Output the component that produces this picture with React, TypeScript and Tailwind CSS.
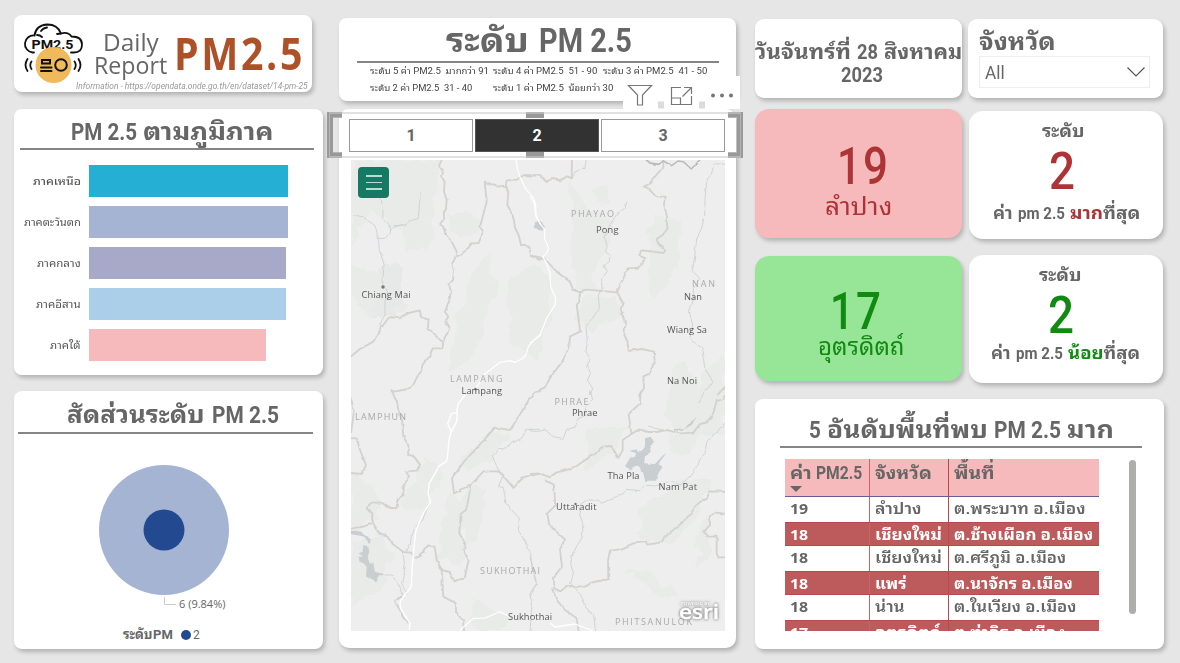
import { useLayoutEffect, useRef, type ReactNode } from "react";

/** Single line of text squeezed or stretched to the width of its box. */
function Fit({ className, children }: { className: string; children: ReactNode }) {
  const box = useRef<HTMLSpanElement>(null);
  const text = useRef<HTMLSpanElement>(null);
  useLayoutEffect(() => {
    const b = box.current;
    const t = text.current;
    if (b && t && t.offsetWidth > 0) {
      t.style.transform = `scaleX(${b.clientWidth / t.offsetWidth})`;
    }
  });
  return (
    <span ref={box} className={"block shrink-0 whitespace-nowrap " + className}>
      <span ref={text} className="inline-block origin-left">
        {children}
      </span>
    </span>
  );
}

const card = "shrink-0 bg-white shadow-[2px_3px_4px_rgba(0,0,0,0.22)]";

function Logo() {
  return (
    <svg className="block h-[62px] w-[62px]" viewBox="0 0 62 62" fill="none" stroke="#111" strokeWidth="1.8" strokeLinecap="round">
      <path d="M11 29.500H9.500A8.500 8.500 0 0 1 11.500 12.500Q13 2 24.500 1.500Q34.500 1.500 38 10.500Q45 8.500 48.500 13.500Q59 13.500 59 21.500Q59 29.500 51 29.500H48" />
      <path d="M14 12Q17 12 19 14M18 8Q20 5 24 4.500M34 11L38 10.500" />
      <text x="8.500" y="25.500" fontFamily="Roboto, sans-serif" fontSize="13.500" fontWeight="700" fill="#111" stroke="none" textLength="42" lengthAdjust="spacingAndGlyphs">PM2.5</text>
      <circle cx="30.500" cy="42" r="18" fill="#f0b95c" stroke="none" />
      <path d="M19 37h8v3.600h-8zM18 44.500h10.500M18 48h10.500" strokeWidth="2" />
      <circle cx="38" cy="42" r="5.800" strokeWidth="2" />
      <path d="M8.500 38.500q-2.500 3.500 0 7.500M4.500 36q-4 6 0 12M51.500 38.500q2.500 3.500 0 7.500M55.500 36q4 6 0 12" />
    </svg>
  );
}

const regions = [
  { name: "ภาคเหนือ", color: "bg-[#26afd5]", bar: "w-[199px]", label: "w-[48px] font-medium" },
  { name: "ภาคตะวันตก", color: "bg-[#a6b4d4]", bar: "w-[199px]", label: "w-[57px]" },
  { name: "ภาคกลาง", color: "bg-[#a8a9c9]", bar: "w-[197px]", label: "w-[44px]" },
  { name: "ภาคอีสาน", color: "bg-[#abcfe8]", bar: "w-[197px]", label: "w-[45px]" },
  { name: "ภาคใต้", color: "bg-[#f6b9bc]", bar: "w-[177px]", label: "w-[31px]" },
];

function MapView() {
  const lbl = { fontFamily: "Open Sans, sans-serif", fontSize: 9.3, fill: "#555" };
  const prov = { fontFamily: "Open Sans, sans-serif", fontSize: 9, fill: "#aaa" };
  return (
    <svg className="block h-[471px] w-[374px]" viewBox="0 0 374 471">
      <filter id="rough" x="0" y="0" width="374" height="471" filterUnits="userSpaceOnUse">
        <feTurbulence type="fractalNoise" baseFrequency="0.14" numOctaves="2" seed="4" />
        <feDisplacementMap in="SourceGraphic" scale="3" xChannelSelector="R" yChannelSelector="G" />
      </filter>
      <filter id="rugged" x="0" y="0" width="374" height="471" filterUnits="userSpaceOnUse">
        <feTurbulence type="fractalNoise" baseFrequency="0.06" numOctaves="3" seed="9" />
        <feDisplacementMap in="SourceGraphic" scale="16" xChannelSelector="R" yChannelSelector="G" />
      </filter>
      <rect width="374" height="471" fill="#eee" />
      <g fill="#e9ebe9" filter="url(#rugged)">
        <path d="M0 0H90L82 60L78 95L60 88L48 70L20 50L0 90ZM98 54L118 52L128 60L124 76L108 78L98 70ZM136 90L146 130L120 200L98 212L106 160L124 110ZM156 120L190 105L200 160L190 190L158 170ZM0 110L50 108L52 152L22 160L0 140Z" />
        <path d="M218 20L236 45L262 60L262 80L242 110L250 130L220 128L222 80ZM300 55L330 60L328 100L312 130L298 140ZM230 137L268 136L270 155L240 170L228 160ZM238 28L258 20L262 44L250 46ZM350 210L374 196V250L350 260ZM190 105L198 120L200 160L186 200L160 180L166 120Z" />
        <path d="M74 295L94 310L70 350L50 346ZM98 330L124 350L108 375L114 400L84 400ZM0 310L30 340L26 360L0 370ZM0 380L30 374L42 400L28 430L0 450ZM148 270L160 272L140 300L118 310L108 300ZM114 330L136 330L124 380L112 390Z" />
        <path d="M236 270L278 268L262 292L234 310ZM318 270L350 274L340 298L320 290ZM290 350L330 320L360 320L350 350L318 385L290 380ZM276 410L300 412L330 440L300 430ZM330 200L350 230L374 225V270L340 275L310 258ZM120 440L158 460L150 471H122ZM350 360L360 350L355 400L345 410Z" />
      </g>
      <path d="M28 108L50 108L52 130L46 150L50 158L24 160L22 148L36 140Z" fill="#e6e9e8" filter="url(#rugged)" />

      <g filter="url(#rough)">
        <g fill="none" stroke="#d4d2cf" strokeWidth="5.500" strokeLinejoin="round">
          <g transform="translate(-11 -5) scale(.33333)">
            <path d="M305 15L297 32L309 50L306 65L314 82L312 110L320 135L318 160L311 172L313 190L300 207L312 222L318 240L336 262L350 290L345 310L337 325L342 350L339 372L328 392L333 410L327 440L315 470L325 485L315 500L328 518L322 535L312 552L307 580L278 580L268 605L248 628L243 650L232 665L222 685L205 702L152 712" />
            <path d="M350 306L380 285L395 265L416 264L430 230L420 215L432 170L440 140L434 80L470 95L498 92L500 76L530 74L552 60L605 62" />
            <path d="M498 92L505 112L502 150L518 178L526 220L536 240L543 270L568 276L573 302L605 308" />
            <path d="M20 615L60 582L100 560L114 535L130 510L148 486L180 490L205 474L240 466L243 486L266 495L263 520L286 542L307 560" />
          </g>
          <g transform="translate(179 -5) scale(.33333)">
            <path d="M0 62L28 60L48 80L65 72L90 76L112 64L125 70L126 10" />
            <path d="M344 10L360 24L384 28L400 16L400 38L384 54L370 72L357 88L341 94L358 102L380 128L404 124L402 148L411 185L412 222L398 240L380 252L385 268L407 285L400 294L336 286L327 302L347 310L325 338L293 340L280 370L266 398L262 412L170 404L152 408L130 408L120 380L80 350L45 312L20 310L0 302" />
            <path d="M262 412L278 442L272 464L286 508L283 540L292 558L296 588L335 582L372 590L374 620L358 656L340 664L342 700L328 720" />
            <path d="M150 408L148 440L140 450L146 492L150 530L120 544L118 580L95 622L66 660L43 698L15 712" />
            <path d="M344 10L360 24L384 28L400 18L425 32L444 18L460 20L484 42L512 12" strokeWidth="4.500" stroke="#bababa" />
            <path d="M562 720L595 685" />
          </g>
          <g transform="translate(-11 230) scale(.33333)">
            <path d="M152 0L170 30L175 60L186 90L190 140L205 165L204 192L222 200L240 224L228 242L198 245L208 260L188 290L188 315L175 330L173 354L150 354L125 338L90 338L82 354L97 370L96 390L104 408L120 432L138 435L158 462L190 486L212 488L228 504L250 485L264 466L284 470L290 510L305 540L328 546L344 574L375 560L386 510L372 485L375 460L358 430L362 372L378 360L388 315L390 285L342 310L336 265L372 215L400 185L450 130L465 113L510 120L530 90L560 40L584 5L600 0" />
            <path d="M390 288L430 244L475 244L492 260L520 294L550 262L605 250" />
            <path d="M305 540L310 620L348 640L348 668L368 690L374 730M20 144L50 145L60 180L78 225L66 252L20 248M20 418L70 410L96 400M28 12L42 60L33 132" />
          </g>
          <g transform="translate(179 230) scale(.33333)">
            <path d="M0 252L30 250L60 262L78 248L110 240L140 228L180 200L200 190L218 170L244 168L265 204L278 180L278 150L304 132L296 72L330 40L332 0" />
            <path d="M304 132L328 118L355 126L380 126L410 120L450 130L490 128L510 102L530 98L550 70L560 32L576 28L595 5" />
            <path d="M45 268L72 285L76 346L52 370L58 406L105 448L90 478L96 530L72 560L72 595L92 604L110 588L165 590L190 576L235 568L234 510L240 482L270 478L310 460L350 456L355 464L395 456L405 438L430 420L455 400L485 368L500 342L530 325L540 304L600 306" />
            <path d="M66 595L80 630L105 660L140 685L147 730M600 372L558 368L540 378L540 405L522 425L535 440L560 440L560 490L565 502L600 502" />
          </g>
        </g>

        <g fill="none" stroke="#cbd0d1" strokeWidth="2.6" strokeLinejoin="round">
          <g transform="translate(-11 -5) scale(.33333)">
            <path d="M122 128L130 160L128 190L148 210L148 235L135 250L115 250L118 285L132 325L128 390L145 410L135 440L135 480L120 505L125 515M20 175L70 186L105 212L115 250M148 225L170 214L195 206L235 190L241 110M160 212L200 210" />
          </g>
          <g transform="translate(179 -5) scale(.33333)">
            <path d="M291 140L285 160L262 175L240 210L225 250L232 275L226 290L240 300L238 320L222 330L232 350L215 370L216 400L205 420L208 460L190 486L168 515L172 560L168 590L180 610L170 635L182 655L172 675L188 700L182 720M126 70L135 50L165 40L168 10" />
            <path d="M600 28L552 26L545 55L530 80L525 130L524 180L515 220L500 250L495 300L487 348L510 370L490 400L490 435L478 470L488 510L480 550L515 580L525 640L548 680L525 710" />
          </g>
          <g transform="translate(-11 230) scale(.33333)">
            <path d="M265 340L250 385L225 410L212 450L200 485M188 485L195 530L185 580L200 615M115 555L158 555L180 590L185 615M600 118L560 118L545 145L512 160L490 180L475 178L458 200L475 240L490 255L475 290L490 292L498 340L538 385L535 420L555 455L572 490L575 530L588 580L570 610L575 650L570 730" />
            <path d="M185 618L166 635L188 680L204 700" strokeWidth="5" />
          </g>
          <g transform="translate(179 230) scale(.33333)">
            <path d="M0 122L20 125L45 120L70 140L100 145L110 118L135 112L145 85L170 75L165 50L188 25L178 0M150 345L165 330L205 330L215 340L280 310L290 298L330 302L345 285L375 288L430 275L450 285L490 250L505 215L525 190L530 155L595 90M150 345L148 370L158 400L158 440L130 485L122 520L130 550L122 580L150 610L165 650L190 670L198 730M0 500L20 580L0 620M528 0L515 20L508 40M355 108L375 115L400 120" />
          </g>
        </g>

        <g fill="#c9ced0">
          <path d="M184 62L190 61L194 67L191 71L184 68Z" />
          <g transform="translate(-11 230) scale(.33333)">
            <path d="M25 422L50 422L70 432L92 448L90 462L72 440L25 430ZM70 465L85 468L88 485L80 500L88 515L100 518L104 545L130 552L112 562L112 578L92 565L78 560L80 530L70 520L58 515L56 500L72 500L55 490L68 485Z" />
          </g>
          <g transform="translate(179 230) scale(.33333)">
            <path d="M345 145L362 140L372 155L360 170L362 185L345 200L342 220L375 222L400 195L408 190L385 222L398 230L385 250L378 272L345 272L340 250L328 228L315 228L300 242L285 228L300 205L315 200L318 190L302 182L320 178L325 190L345 168Z" />
            <path d="M435 117L465 115L480 95L500 80L485 105L460 120L435 122Z" />
          </g>
        </g>
      </g>

      <g fill="none" stroke="#fff" strokeWidth="3.500" strokeLinejoin="round">
        <g transform="translate(-11 -5) scale(.33333)">
          <path d="M528 15L532 40L540 65L555 98L582 132L587 150L588 180L602 210M602 540L582 555L565 575L558 600L545 612L525 622L510 617L480 622L450 645L430 660L415 690L405 702" />
        </g>
        <g transform="translate(179 -5) scale(.33333)">
          <path d="M0 125L12 142L18 185L30 205L45 225L43 250L56 280L50 295L38 305L50 325L60 355L62 395L77 430L75 450L50 490L30 540L0 565" />
        </g>
        <g transform="translate(-11 230) scale(.33333)">
          <path d="M375 15L355 42L350 62L352 70L350 95L332 130L327 150L322 205L318 215L295 230L290 242L268 280L264 310L272 335L250 370L228 420L222 470L216 540L214 590L180 635L182 655L210 700L208 720M350 68L335 70L323 100L334 125" strokeWidth="4" />
          <path d="M360 720L400 685L435 684L480 665L510 680" />
        </g>
        <path d="M199 463L204 467L224 464L242 471" strokeWidth="1.300" />
      </g>

      <circle cx="32" cy="127" r="1.700" fill="#777" />
      <g fill="#777">
        <circle cx="124.500" cy="229" r="1.200" />
        <circle cx="224.500" cy="344" r="1.200" />
      </g>
      <g {...prov}>
        <text x="220" y="57" textLength="43">PHAYAO</text>
        <text x="341" y="127" textLength="23">NAN</text>
        <text x="99" y="221.500" textLength="52.500">LAMPANG</text>
        <text x="4" y="259.500" textLength="51">LAMPHUN</text>
        <text x="203.500" y="244.500" textLength="34">PHRAE</text>
        <text x="129" y="413.500" textLength="60">SUKHOTHAI</text>
        <text x="264" y="464.500" textLength="77">PHITSANULOK</text>
      </g>
      <g {...lbl}>
        <text x="10.500" y="137.500" textLength="49">Chiang Mai</text>
        <text x="245" y="72.500" textLength="22.500">Pong</text>
        <text x="333" y="140" textLength="18">Nan</text>
        <text x="316" y="172.500" textLength="40">Wiang Sa</text>
        <text x="316" y="224" textLength="30">Na Noi</text>
        <text x="110.500" y="234" textLength="40.500">Lampang</text>
        <text x="221" y="255.500" textLength="25.500">Phrae</text>
        <text x="256.500" y="319" textLength="32">Tha Pla</text>
        <text x="307.500" y="329.500" textLength="38.500">Nam Pat</text>
        <text x="205" y="349.500" textLength="40.500">Uttaradit</text>
        <text x="157" y="460" textLength="44">Sukhothai</text>
      </g>
      <g className="drop-shadow-[0_0_1.5px_#555]" fontFamily="Open Sans, sans-serif" fontWeight="600" fill="#fff">
        <text x="330" y="445" fontSize="4" textLength="29" lengthAdjust="spacingAndGlyphs">POWERED BY</text>
        <text x="328" y="459" fontSize="20.500" textLength="40" lengthAdjust="spacingAndGlyphs" stroke="#fff" strokeWidth=".4">esri</text>
      </g>
    </svg>
  );
}

function Slicer() {
  const bar = "absolute bg-[#999]";
  const soft = "absolute bg-[#b5b5b5]";
  return (
    <div className="relative -ml-3 flex h-[46px] w-[416px] shrink-0 gap-0.5 border-y-2 border-[#e1e1e1] py-[5px] pl-[22px] font-bold text-[#666]">
      <div className="h-[33px] w-[124px] border border-[#999] bg-white text-center text-[16px] leading-[32px]">1</div>
      <div className="h-[33px] w-[124px] border border-[#555] bg-[#323232] text-center text-[16px] leading-[32px] text-white">2</div>
      <div className="h-[33px] w-[124px] border border-[#999] bg-white text-center text-[16px] leading-[32px]">3</div>
      <i className={soft + " -top-[2px] left-0 h-[46px] w-[6px]"} />
      <i className={soft + " -top-[2px] left-0 h-[6px] w-[15px]"} />
      <i className={soft + " -bottom-[2px] left-0 h-[6px] w-[15px]"} />
      <i className={bar + " top-0 left-[3px] h-[42px] w-[3px]"} />
      <i className={bar + " top-0 left-[3px] h-[3px] w-[12px]"} />
      <i className={bar + " bottom-0 left-[3px] h-[3px] w-[12px]"} />
      <i className={bar + " -top-[2px] left-0 h-[46px] w-[2px]"} />
      <i className={soft + " -top-[2px] right-0 h-[46px] w-[6px]"} />
      <i className={soft + " -top-[2px] right-0 h-[6px] w-[15px]"} />
      <i className={soft + " -bottom-[2px] right-0 h-[6px] w-[15px]"} />
      <i className={bar + " top-0 right-[3px] h-[42px] w-[3px]"} />
      <i className={bar + " top-0 right-[3px] h-[3px] w-[12px]"} />
      <i className={bar + " right-[3px] bottom-0 h-[3px] w-[12px]"} />
      <i className={bar + " -top-[2px] right-0 h-[46px] w-[2px]"} />
      <i className={soft + " -top-[2px] left-[199px] h-[6px] w-[18px]"} />
      <i className={bar + " top-0 left-[199px] h-[4px] w-[18px]"} />
      <i className={soft + " -bottom-[2px] left-[199px] h-[6px] w-[18px]"} />
      <i className={bar + " bottom-0 left-[199px] h-[4px] w-[18px]"} />
    </div>
  );
}

function Toolbar() {
  return (
    <div className="absolute top-[58px] left-[284px] h-[33px] w-[117px] bg-white">
      <svg className="block" width="117" height="33" viewBox="0 0 117 33" fill="none" stroke="#777" strokeWidth="1.200">
        <path d="M35 25.500h6v7h-6zM76 25.500h6v7h-6z" fill="#dcdcdc" stroke="none" />
        <path d="M5.500 9.500h23L19.500 19v10h-5V19z" />
        <path d="M58 11.500H48.500V28.500H68.500V20M48.500 22h9v6.500M61 11.500h7.500V18M68.500 11.500L59.500 20.500" />
        <g fill="#777" stroke="none">
          <circle cx="90" cy="19.500" r="2" />
          <circle cx="99" cy="19.500" r="2" />
          <circle cx="108" cy="19.500" r="2" />
        </g>
      </svg>
    </div>
  );
}

const rows = [
  { pm: "19", prov: "ลำปาง", pw: "w-[47px]", area: "ต.พระบาท อ.เมือง", aw: "w-[131px]" },
  { pm: "18", prov: "เชียงใหม่", pw: "w-[67px]", area: "ต.ช้างเผือก อ.เมือง", aw: "w-[139px]" },
  { pm: "18", prov: "เชียงใหม่", pw: "w-[67px]", area: "ต.ศรีภูมิ อ.เมือง", aw: "w-[112px]" },
  { pm: "18", prov: "แพร่", pw: "w-[31px]", area: "ต.นาจักร อ.เมือง", aw: "w-[119px]" },
  { pm: "18", prov: "น่าน", pw: "w-[30px]", area: "ต.ในเวียง อ.เมือง", aw: "w-[123px]" },
  { pm: "17", prov: "อุตรดิตถ์", pw: "w-[66px]", area: "ต.ท่าอิฐ อ.เมือง", aw: "w-[111px]" },
];

function RankTable() {
  return (
    <div className="flex h-[172px] w-[314px] shrink-0 flex-col overflow-hidden text-[#666]">
      <div className="flex h-[38px] shrink-0 border-b border-[#6b5a96] bg-[#f6b9bc] text-[18px] leading-[28px] font-bold">
        <div className="w-[85px] border-r border-[#cb6468] pl-[5px]">
          <div className="flex h-[27px]">
            <Fit className="w-[22px]">ค่า</Fit>
            <Fit className="ml-[4px] w-[46px]">PM2.5</Fit>
          </div>
          <div className="h-0 w-0 border-x-[6px] border-t-[6px] border-x-transparent border-t-[#666]" />
        </div>
        <div className="w-[79px] border-r border-[#b8494d] pl-[5px]">
          <Fit className="w-[57px]">จังหวัด</Fit>
        </div>
        <div className="pl-[5px]">
          <Fit className="w-[41px]">พื้นที่</Fit>
        </div>
      </div>
      {rows.map((r, i) => (
        <div
          key={i}
          className={
            "flex h-[24.5px] shrink-0 text-[15px] leading-[24px] " +
            (i % 2 ? "border-y border-[#b8494d] bg-[#bd5b5c] font-bold text-white" : "bg-white font-semibold")
          }
        >
          <div className="w-[85px] border-r border-[#cb6468] pl-[5px]">
            <Fit className="w-[18px] font-['Open_Sans'] leading-[22px] font-bold">{r.pm}</Fit>
          </div>
          <div className="w-[79px] border-r border-[#b8494d] pl-[5px]">
            <Fit className={r.pw}>{r.prov}</Fit>
          </div>
          <div className="pl-[5px]">
            <Fit className={r.aw}>{r.area}</Fit>
          </div>
        </div>
      ))}
    </div>
  );
}

export default function App() {
  return (
    <div className="flex h-[663px] w-[1180px] overflow-hidden bg-[#e6e6e6] pl-[14px] font-[Roboto,'Noto_Sans_Thai_Looped',Loma,Waree,'Noto_Sans_Thai','Noto_Sans',sans-serif] text-[#666]">
      <div className="flex w-[325px] shrink-0 flex-col pt-[15px]">
        <section className={card + " relative flex h-[77px] w-[298px] rounded-[8px] pt-[8px] pl-[9px]"}>
          <Logo />
          <div className="ml-[9px] flex w-[73px] flex-col items-center pt-[8px]">
            <Fit className="w-[56px] font-['Open_Sans'] text-[23.500px] leading-[23px]">Daily</Fit>
            <Fit className="w-[73px] font-['Open_Sans'] text-[23.500px] leading-[23px]">Report</Fit>
          </div>
          <Fit className="ml-[7px] w-[131px] pt-[7px] font-['Open_Sans'] text-[45px] leading-[46px] font-bold tracking-[3px] text-[#ad5129]">PM2.5</Fit>
          <div className="absolute top-[65px] left-[62px]">
            <Fit className="w-[232px] text-[8.500px] leading-[12px] text-[#999] italic">Information - https://opendata.onde.go.th/en/dataset/14-pm-25</Fit>
          </div>
        </section>

        <section className={card + " mt-[17px] h-[266px] w-[309px] rounded-[8px]"}>
          <h2 className="flex gap-[6px] pt-[8px] pl-[57px] text-[24px] leading-[30px] font-bold">
            <Fit className="w-[66px]">PM 2.5</Fit>
            <Fit className="w-[131px]">ตามภูมิภาค</Fit>
          </h2>
          <div className="mt-[1px] ml-[6px] h-[2px] w-[294px] bg-[#858585]" />
          <div className="mt-[15px] flex flex-col gap-[9px]">
            {regions.map((r) => (
              <div key={r.name} className="flex h-8 items-center">
                <div className="flex w-[67px] justify-end pt-[2px]">
                  <Fit className={"text-[11px] leading-[20px] text-[#555] " + r.label}>{r.name}</Fit>
                </div>
                <div className={"ml-[8px] h-8 " + r.bar + " " + r.color} />
              </div>
            ))}
          </div>
        </section>

        <section className={card + " mt-[16px] h-[258px] w-[309px] rounded-[8px]"}>
          <h2 className="flex gap-[7px] pt-[9px] pl-[53px] text-[24px] leading-[30px] font-bold">
            <Fit className="w-[138px]">สัดส่วนระดับ</Fit>
            <Fit className="w-[67px]">PM 2.5</Fit>
          </h2>
          <div className="mt-[2px] ml-[4px] h-[2px] w-[295px] bg-[#858585]" />
          <div className="relative mt-[31px] ml-[85px]">
            <svg className="block" width="132" height="142" viewBox="0 0 132 142">
              <circle cx="65" cy="65" r="65" fill="#a6b4d4" />
              <circle cx="65" cy="65" r="20.500" fill="#234a91" />
              <path d="M65.500 132v7.500h11.500" fill="none" stroke="#ccc" />
            </svg>
            <div className="absolute top-[131px] left-[80px]">
              <Fit className="w-[47px] font-['Open_Sans'] text-[11px] leading-[16px]">6 (9.84%)</Fit>
            </div>
          </div>
          <div className="mt-[20px] ml-[109px] flex items-center text-[13px] leading-[16px]">
            <Fit className="w-[30px] font-bold">ระดับ</Fit>
            <Fit className="w-[20px] font-bold">PM</Fit>
            <span className="ml-[8px] h-[10px] w-[10px] rounded-full bg-[#234a91]" />
            <span className="ml-[2px] text-[12px]">2</span>
          </div>
        </section>
      </div>

      <div className="flex w-[416px] shrink-0 flex-col pt-[18px]">
        <section className={card + " relative z-10 flex h-[83px] w-[397px] flex-col rounded-[8px]"}>
          <h1 className="flex gap-[10px] pt-[3px] pl-[107px] text-[33px] leading-[40px] font-bold">
            <Fit className="w-[83px]">ระดับ</Fit>
            <Fit className="w-[93px]">PM 2.5</Fit>
          </h1>
          <div className="ml-[18px] h-[2px] w-[362px] shrink-0 bg-[#858585]" />
          <div className="ml-[31px] grid grid-cols-[123px_110px_110px] text-[9px] leading-[17px] text-[#444]">
            <Fit className="w-[119px]">ระดับ 5 ค่า PM2.5 &nbsp;มากกว่า 91</Fit>
            <Fit className="w-[104px]">ระดับ 4 ค่า PM2.5 &nbsp;51 - 90</Fit>
            <Fit className="w-[104px]">ระดับ 3 ค่า PM2.5 &nbsp;41 - 50</Fit>
            <Fit className="w-[102px]">ระดับ 2 ค่า PM2.5 &nbsp;31 - 40</Fit>
            <Fit className="w-[120px]">ระดับ 1 ค่า PM2.5 &nbsp;น้อยกว่า 30</Fit>
          </div>
          <Toolbar />
        </section>
        <section className={card + " mt-[8px] flex h-[539px] w-[397px] flex-col rounded-[10px] pt-[3px]"}>
          <Slicer />
          <div className="relative mt-[2px] ml-[12px] w-[374px]">
            <MapView />
            <div className="absolute top-[7px] left-[7px] flex h-[31px] w-[31px] flex-col items-center justify-center gap-[5px] rounded-[4px] bg-[#147a64]">
              <i className="h-[1.500px] w-4 bg-[#b9dcd3]" />
              <i className="h-[1.500px] w-4 bg-[#b9dcd3]" />
              <i className="h-[1.500px] w-4 bg-[#b9dcd3]" />
            </div>
          </div>
        </section>
      </div>

      <div className="flex w-[409px] shrink-0 flex-col pt-[19px]">
        <div className="flex h-[79px] gap-[6px]">
          <section className={card + " flex w-[207px] flex-col items-center rounded-[9px] pt-[21px] font-bold"}>
            <div className="flex gap-[6px] text-[20px] leading-[24px]">
              <Fit className="w-[96px]">วันจันทร์ที่</Fit>
              <Fit className="w-[21px]">28</Fit>
              <Fit className="w-[78px]">สิงหาคม</Fit>
            </div>
            <Fit className="ml-[6px] w-[42px] text-[20px] leading-[22px]">2023</Fit>
          </section>
          <section className={card + " w-[195px] rounded-[9px]"}>
            <Fit className="ml-[11px] w-[77px] pt-[9px] text-[24px] leading-[28px] font-bold">จังหวัด</Fit>
            <div className="ml-[11px] flex h-8 w-[171px] items-center justify-between border border-[#eee] pr-[4px] pl-[5px]">
              <Fit className="w-[20px] pt-[2px] text-[19px] leading-[30px]">All</Fit>
              <svg width="18" height="10" viewBox="0 0 18 10" fill="none" stroke="#555" strokeWidth="1.200">
                <path d="M.5 .5L9 9L17.500 .5" />
              </svg>
            </div>
          </section>
        </div>

        <div className="mt-[11px] flex items-start gap-[7px]">
          <section className={card + " flex h-[129px] w-[207px] flex-col items-center rounded-[14px] !bg-[#f6b9bc] pt-[31px] text-[#ad3336]"}>
            <div className="ml-[8px] flex gap-[2px] text-[51px] leading-[53px] font-medium">
              <Fit className="w-[24px]">1</Fit>
              <Fit className="w-[25px]">9</Fit>
            </div>
            <Fit className="mr-px w-[67px] text-[25px] leading-[28px]">ลำปาง</Fit>
          </section>
          <section className={card + " mt-[2px] flex h-[128px] w-[194px] flex-col items-center rounded-[14px] font-bold"}>
            <Fit className="mt-[8px] mr-[6px] w-[43px] text-[17px] leading-[24px]">ระดับ</Fit>
            <Fit className="mt-[4px] mr-[8px] w-[26px] text-[51px] leading-[50px] font-medium text-[#ad3336]">2</Fit>
            <div className="mt-[3px] ml-px flex gap-[5px] text-[17px] leading-[26px]">
              <Fit className="w-[20px]">ค่า</Fit>
              <Fit className="w-[47px]">pm 2.5</Fit>
              <Fit className="w-[70px]">
                <span className="text-[#ad3336]">มาก</span>ที่สุด
              </Fit>
            </div>
          </section>
        </div>

        <div className="mt-[16px] flex items-start gap-[7px]">
          <section className={card + " mt-px flex h-[125px] w-[207px] flex-col items-center rounded-[14px] !bg-[#97e697] pt-[29px] text-[#128a12]"}>
            <div className="mr-[6px] flex gap-[2px] text-[51px] leading-[53px] font-medium">
              <Fit className="w-[24px]">1</Fit>
              <Fit className="w-[25px]">7</Fit>
            </div>
            <Fit className="ml-[5px] w-[87px] text-[25px] leading-[18px]">อุตรดิตถ์</Fit>
          </section>
          <section className={card + " flex h-[128px] w-[194px] flex-col items-center rounded-[14px] font-bold"}>
            <Fit className="mt-[8px] mr-[11px] w-[43px] text-[17px] leading-[24px]">ระดับ</Fit>
            <Fit className="mt-[4px] mr-[10px] w-[26px] text-[51px] leading-[50px] font-medium text-[#128a12]">2</Fit>
            <div className="-mt-px mr-px flex gap-[5px] text-[17px] leading-[26px]">
              <Fit className="w-[20px]">ค่า</Fit>
              <Fit className="w-[47px]">pm 2.5</Fit>
              <Fit className="w-[72px]">
                <span className="text-[#128a12]">น้อย</span>ที่สุด
              </Fit>
            </div>
          </section>
        </div>

        <section className={card + " mt-[16px] h-[250px] w-[409px] rounded-[8px]"}>
          <h2 className="flex pt-[16px] pl-[54px] text-[24px] leading-[30px] font-bold">
            <Fit className="w-[12px]">5</Fit>
            <Fit className="ml-[6px] w-[161px]">อันดับพื้นที่พบ</Fit>
            <Fit className="ml-[6px] w-[67px]">PM 2.5</Fit>
            <Fit className="ml-[6px] w-[47px]">มาก</Fit>
          </h2>
          <div className="mt-[1px] ml-[25px] h-[2px] w-[362px] bg-[#858585]" />
          <div className="mt-[11px] ml-[30px] flex">
            <RankTable />
            <div className="mt-px ml-[30px] h-[154px] w-[7px] rounded-full bg-[#adadab]" />
          </div>
        </section>
      </div>
    </div>
  );
}
